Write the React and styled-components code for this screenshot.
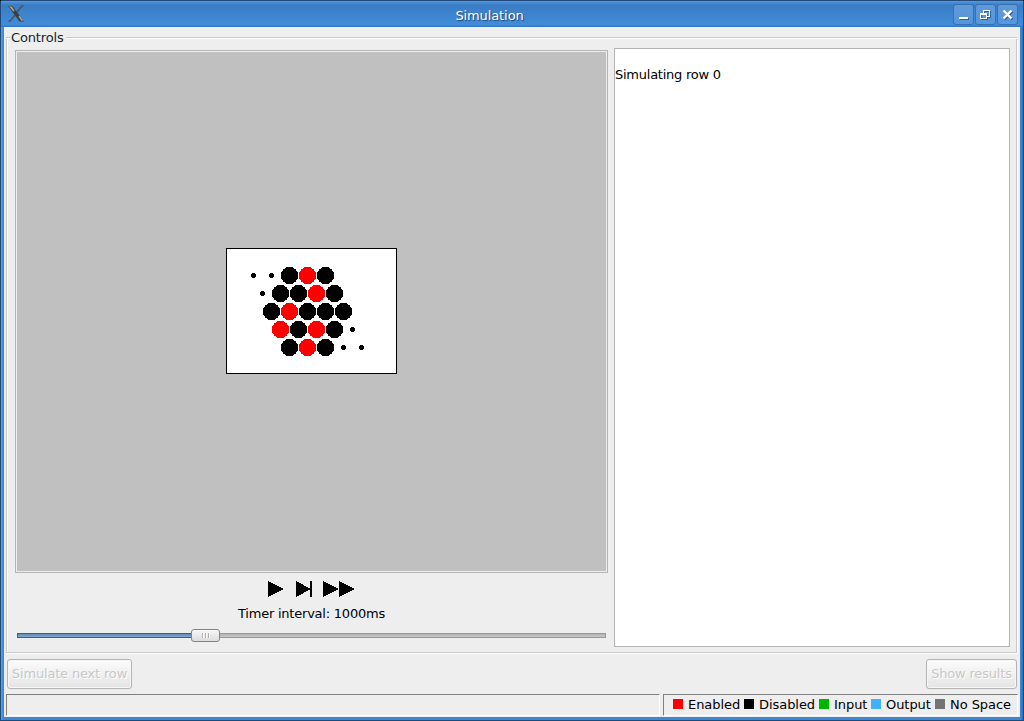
import React from "react";
import styled, { createGlobalStyle } from "styled-components";

const Global = createGlobalStyle`
  * { box-sizing: border-box; }
  body { margin: 0; background: #000; overflow: hidden; }
  button { font: inherit; padding: 0; }
`;

const Frame = styled.div`
  width: 1024px;
  height: 721px;
  display: flex;
  flex-direction: column;
  padding: 0 3px 3px;
  border: 1px solid #1f4a78;
  border-top-color: #214a78;
  border-radius: 2px 2px 0 0;
  background: linear-gradient(90deg, #66a5e2 0, #3d87d3 2px, #3d87d3 1020px, #2c6cb4 1022px);
  font: 13px/16px "DejaVu Sans", "Liberation Sans", sans-serif;
  color: #000;
`;

const TitleBar = styled.header`
  flex: none;
  height: 26px;
  margin: 0 -3px;
  padding: 3px 5px 0 6px;
  display: flex;
  align-items: flex-start;
  background: linear-gradient(#5a9ce2 0, #4a90da 1px, #3a7cc4 4px, #3b7fc8 8px, #418ddb 24px, #3479c3 25px, #3479c3 26px);
`;

const Title = styled.h1`
  flex: 1;
  margin: 4px 0 0 1px;
  font-size: 13px;
  line-height: 16px;
  font-weight: 400;
  letter-spacing: -0.1px;
  text-align: center;
  color: #fff;
  text-shadow: 1px 1px 1px #1c4170;
`;

const WindowButtons = styled.div`
  display: flex;
  gap: 1px;
`;

const WindowButton = styled.button`
  width: 21px;
  height: 21px;
  display: block;
  border: 1px solid #3871b3;
  border-radius: 3px;
  background: linear-gradient(#6299d6, #5596de);
  svg { display: block; }
`;

const Content = styled.main`
  flex: 1;
  min-height: 0;
  display: flex;
  flex-direction: column;
  background: #eee;
  padding: 2px 2px 1px;
`;

const Group = styled.section`
  height: 624px;
  margin-right: 1px;
  display: flex;
  flex-direction: column;
`;

const GroupHeader = styled.div`
  height: 16px;
  display: flex;
  align-items: center;
  color: #222;
`;

const HeaderLine = styled.i`
  width: ${(p) => p.$w || "auto"};
  flex: ${(p) => (p.$w ? "none" : 1)};
  height: 2px;
  margin-top: 2px;
  background: linear-gradient(#c8c8c8 50%, #fff 50%);
`;

const Legend = styled.span`
  margin: 2px 2px 0 1px;
  letter-spacing: -0.15px;
  white-space: nowrap;
`;

const GroupBody = styled.div`
  flex: 1;
  display: flex;
  align-items: flex-start;
  gap: 6px;
  margin: -6px 0 0;
  padding: 9px 6px 0 8px;
  border: solid #c8c8c8;
  border-width: 0 1px 1px;
  box-shadow: 1px 1px #fff, inset 1px 0 #fff;
`;

const Left = styled.div`
  width: 593px;
  padding-top: 2px;
`;

const Viewport = styled.div`
  height: 523px;
  padding-bottom: 2px;
  display: flex;
  align-items: center;
  justify-content: center;
  border: 1px solid #b4b4b4;
  box-shadow: inset 0 0 0 1px #eee;
  background: #c0c0c0;
`;

const Board = styled.svg`
  display: block;
  width: 171px;
  height: 126px;
`;

const Playback = styled.div`
  display: flex;
  justify-content: center;
  height: 16px;
  margin-top: 8px;
  svg { display: block; }
`;

const TimerLabel = styled.div`
  margin-top: 9px;
  letter-spacing: -0.22px;
  text-align: center;
`;

const Slider = styled.div`
  height: 13px;
  margin: 7px 2px 0;
  display: flex;
  align-items: center;
`;

const Track = styled.div`
  height: 5px;
  width: ${(p) => (p.$filled ? "174px" : "auto")};
  flex: ${(p) => (p.$filled ? "none" : 1)};
  border: 1px solid ${(p) => (p.$filled ? "#455d78" : "#999")};
  border-${(p) => (p.$filled ? "right" : "left")}: 0;
  background: ${(p) => (p.$filled ? "linear-gradient(#628ab2, #7fa8d2)" : "linear-gradient(#b2b2b2, #c8c8c8)")};
`;

const Thumb = styled.div`
  width: 29px;
  height: 13px;
  display: flex;
  justify-content: center;
  align-items: center;
  gap: 2px;
  border: 1px solid #858585;
  border-radius: 3px;
  background: linear-gradient(#f8f8f8, #dcdcdc);
  i { width: 1px; height: 5px; background: #b0b0b0; box-shadow: 1px 0 #fff; }
`;

const Log = styled.div`
  width: 396px;
  height: 599px;
  padding: 18px 0 0;
  border: 1px solid #b4b4b4;
  background: #fff;
  letter-spacing: -0.25px;
`;

const Actions = styled.div`
  display: flex;
  justify-content: space-between;
  height: 30px;
  margin: 6px 1px 0;
`;

const ActionButton = styled.button`
  width: ${(p) => p.$w}px;
  height: 30px;
  border: 1px solid #b5b5b5;
  border-radius: 3px;
  background: linear-gradient(#fcfcfc, #e4e4e4);
  box-shadow: inset 0 0 0 1px #f6f6f6, 0 0 1px #ddd;
  color: #c8c8c8;
  text-shadow: 1px 1px #fff;
  letter-spacing: -0.17px;
  white-space: nowrap;
`;

const StatusBar = styled.footer`
  display: flex;
  gap: 3px;
  height: 22px;
  margin-top: 5px;
`;

const StatusCell = styled.div`
  width: ${(p) => p.$w}px;
  display: flex;
  align-items: center;
  padding-left: 9px;
  border: 1px solid;
  border-color: #808080 #fff #fff #808080;
`;

const Key = styled.span`
  display: flex;
  align-items: center;
  width: ${(p) => p.$w}px;
  letter-spacing: -0.05px;
  white-space: nowrap;
  &::before {
    content: "";
    width: 10px;
    height: 10px;
    margin-right: 5px;
    margin-top: -2px;
    background: ${(p) => p.$color};
  }
`;

const ROWS = [
  { x: 27.5, cells: "..BRB" },
  { x: 36.5, cells: ".BBRB" },
  { x: 45.5, cells: "BRBBB" },
  { x: 54.5, cells: "RBRB." },
  { x: 63.5, cells: "BRB.." },
];

const KEYS = [
  ["Enabled", "#ff0000", 71],
  ["Disabled", "#000000", 75],
  ["Input", "#00b400", 52],
  ["Output", "#40b0ff", 64],
  ["No Space", "#747474", 80],
];

function HexBoard() {
  return (
    <Board viewBox="0 0 171 126">
      <rect x=".5" y=".5" width="170" height="125" fill="#fff" stroke="#000" />
      {ROWS.map((row, r) =>
        [...row.cells].map((c, i) => (
          <circle
            key={`${r}-${i}`}
            cx={row.x + 18 * i}
            cy={27.5 + 18 * r}
            r={c === "." ? 2.6 : 8.6}
            fill={c === "R" ? "#f00" : "#000"}
            shapeRendering="crispEdges"
          />
        ))
      )}
    </Board>
  );
}

function XLogo() {
  return (
    <svg width="18" height="18" viewBox="0 0 18 18">
      <path d="M16.500 2h-1.500L9.500 8.500M8 11L3 17H1.500" fill="none" stroke="#4e5458" strokeWidth="1.500" />
      <path d="M1 2h4.500l11.500 15.500h-4.500z" fill="#3c3f42" />
      <path d="M2 2.500h2.700l3 4.300-1.200.7z" fill="#aaa59a" />
      <path d="M11.500 12.500l1.200-.7 3.600 5h-2z" fill="#aaa59a" />
    </svg>
  );
}

export default function App() {
  return (
    <>
      <Global />
      <Frame>
        <TitleBar>
          <XLogo />
          <Title>Simulation</Title>
          <WindowButtons>
            <WindowButton aria-label="Minimize">
              <svg width="19" height="19" shapeRendering="crispEdges">
                <path d="M6 13h9v2H6z" fill="#2e5f98" />
                <path d="M5 12h9v2H5z" fill="#fff" />
              </svg>
            </WindowButton>
            <WindowButton aria-label="Restore">
              <svg width="19" height="19" shapeRendering="crispEdges" fill="none">
                <path d="M7.500 8V5.500h6v6H11M4.500 8.500h6v5h-6z" stroke="#2e5f98" transform="translate(1 1)" />
                <path d="M7.500 8V5.500h6v6H11M4.500 8.500h6v5h-6zM4 9.500h7" stroke="#fff" />
              </svg>
            </WindowButton>
            <WindowButton aria-label="Close">
              <svg width="19" height="19" fill="none" strokeWidth="2.400">
                <path d="M6 6l8 8M14 6l-8 8" stroke="#2e5f98" transform="translate(.5 .5)" />
                <path d="M5.500 5.500l8 8M13.500 5.500l-8 8" stroke="#fff" />
              </svg>
            </WindowButton>
          </WindowButtons>
        </TitleBar>
        <Content>
          <Group>
            <GroupHeader>
              <HeaderLine $w="4px" />
              <Legend>Controls</Legend>
              <HeaderLine />
            </GroupHeader>
            <GroupBody>
              <Left>
                <Viewport>
                  <HexBoard />
                </Viewport>
                <Playback>
                  <svg width="87" height="16" shapeRendering="crispEdges">
                    <path d="M0 0l16 8L0 16zM28 0l15 8-15 8zM42 0h2v16h-2zM55 0l16 8-16 8zM71 0l16 8-16 8z" />
                  </svg>
                </Playback>
                <TimerLabel>Timer interval: 1000ms</TimerLabel>
                <Slider>
                  <Track $filled />
                  <Thumb><i /><i /><i /></Thumb>
                  <Track />
                </Slider>
              </Left>
              <Log>Simulating row 0</Log>
            </GroupBody>
          </Group>
          <Actions>
            <ActionButton $w={125} disabled>Simulate next row</ActionButton>
            <ActionButton $w={91} disabled>Show results</ActionButton>
          </Actions>
          <StatusBar>
            <StatusCell $w={654} />
            <StatusCell $w={355}>
              {KEYS.map(([name, color, w]) => (
                <Key key={name} $color={color} $w={w}>{name}</Key>
              ))}
            </StatusCell>
          </StatusBar>
        </Content>
      </Frame>
    </>
  );
}
